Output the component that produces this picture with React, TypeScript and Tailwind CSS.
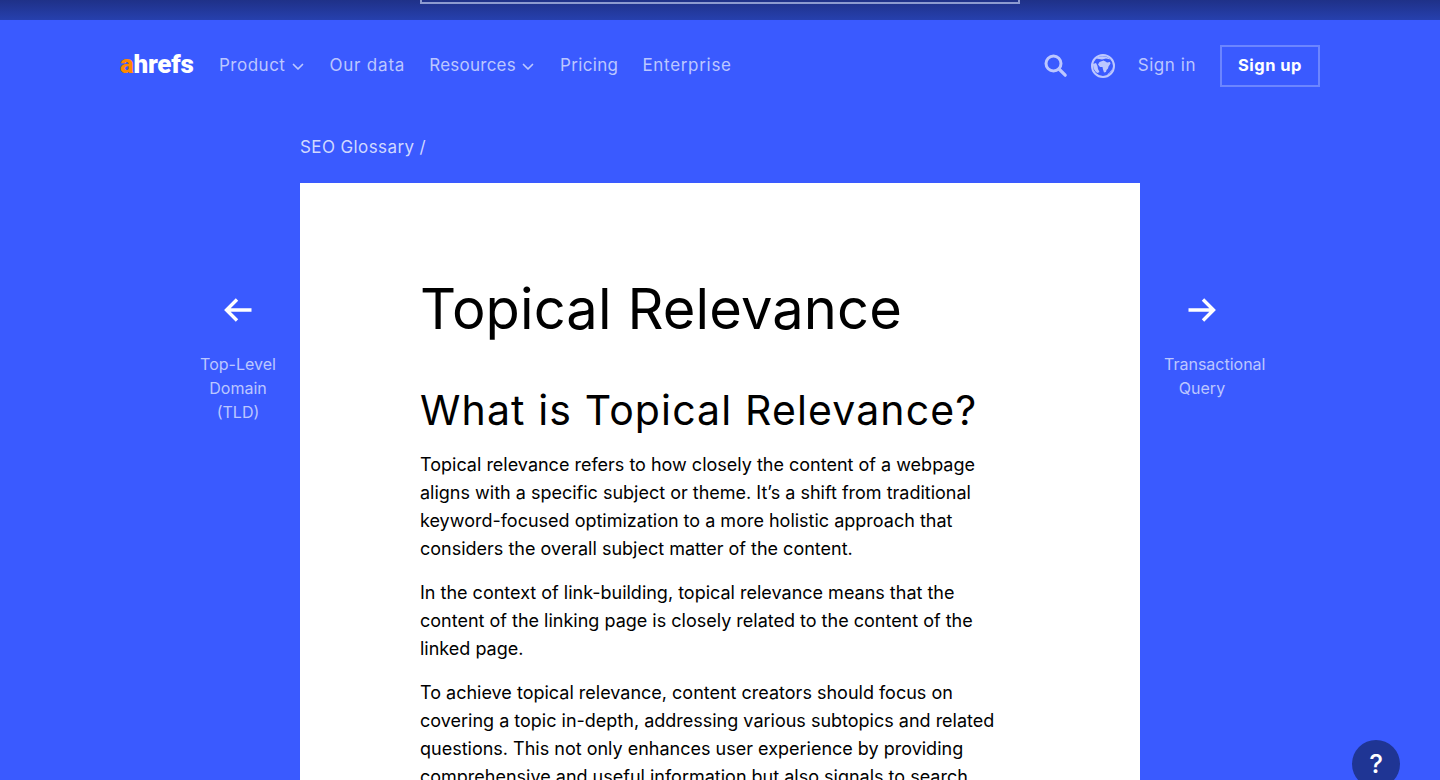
import React from "react";

function Chevron({ after }: { after: string }) {
  return (
    <svg width="12" height="8" viewBox="0 0 12 8" fill="none" className={after}>
      <path d="M1.500 1.500L6 6l4.500-4.500" stroke="#bcc7ff" strokeWidth="1.700" strokeLinecap="round" strokeLinejoin="round" />
    </svg>
  );
}

function Arrow({ flip }: { flip?: boolean }) {
  return (
    <svg width="28" height="26" viewBox="0 0 28 26" fill="none" className={flip ? "rotate-180" : ""}>
      <path d="M27.500 13H3.500M13 2.500L2.500 13 13 23.500" stroke="#fff" strokeWidth="3.400" />
    </svg>
  );
}

function Side({ lines, flip }: { lines: string[]; flip?: boolean }) {
  return (
    <div className="w-[76px] shrink-0 pt-[114px] flex flex-col items-center">
      <Arrow flip={flip} />
      <div className="mt-[29px] w-[76px] text-center text-[16px] leading-[24px] text-[#bcc7ff]">
        {lines.map((l) => (
          <div key={l}>{l}</div>
        ))}
      </div>
    </div>
  );
}

export default function App() {
  return (
    <div className="relative h-[780px] overflow-hidden bg-[#3a5aff] font-['Inter',sans-serif] text-black">
      <div className="h-[20px] bg-gradient-to-b from-[#1f3188] to-[#2640ae] flex justify-center">
        <div className="w-[600px] h-[4px] border-x-2 border-b-2 border-[#8d9bd0]" />
      </div>

      <header className="mx-auto w-[1200px] h-[91px] flex items-center justify-between text-[#bcc7ff] text-[17px]">
        <div className="flex items-center">
          <div className="w-[99px] text-[26px] leading-none font-black tracking-[-0.25px] text-white font-['Roboto',sans-serif] -mt-[3px]">
            <span className="text-[#ff8800]">a</span>hrefs
          </div>
          <nav className="flex items-center gap-[24px]">
            <a className="flex items-center tracking-[0.5px]">Product<Chevron after="ml-[7px] mr-[1px] mt-[3px]" /></a>
            <a className="tracking-[0.8px]">Our data</a>
            <a className="flex items-center tracking-[0.25px]">Resources<Chevron after="ml-[6px] mr-[2px] mt-[3px]" /></a>
            <a className="tracking-[0.35px]">Pricing</a>
            <a className="tracking-[0.7px]">Enterprise</a>
          </nav>
        </div>
        <div className="flex items-center">
          <svg width="24" height="24" viewBox="0 0 24 24" fill="none" className="mr-[23px] mt-[1px]">
            <circle cx="9.500" cy="9.500" r="7.500" stroke="#bcc7ff" strokeWidth="3" />
            <path d="M15 15l6.200 6.200" stroke="#bcc7ff" strokeWidth="3.200" strokeLinecap="round" />
          </svg>
          <svg width="24" height="24" viewBox="0 0 24 24" fill="none" className="mr-[23px] mt-[1px]">
            <circle cx="12" cy="12" r="11" stroke="#bcc7ff" strokeWidth="2" />
            <path d="M5 4.500C8 1.500 16 1.500 19.500 5.500L15 4.500 11 5.500 8 5z" fill="#bcc7ff" />
            <path d="M8.500 8l4-1.500 2 1 1.500 1 3-.5 .5 1.500-2 3-.5 2-1.500 1.500-.5 2-2 .5-1-3-.5-2.500-2.500 0-2-2.500z" fill="#bcc7ff" />
            <path d="M2 10l3-1 1.500 3 .5 3 1.500 3-2 1C3 17 2 13 2 10z" fill="#bcc7ff" />
            <path d="M22 14c-1 3-3.500 6-6.500 7l3-2.500z" fill="#bcc7ff" />
          </svg>
          <span className="mr-[24px] tracking-[0.55px]">Sign in</span>
          <button className="w-[100px] h-[42px] border-2 border-[#6c85ff] text-white font-bold text-[16.500px] tracking-[0.5px]">Sign up</button>
        </div>
      </header>

      <div className="mx-auto w-[840px] h-[72px] pt-[24px] text-[#d0d8ff] text-[17px] tracking-[0.4px] leading-[24px]">
        SEO Glossary /
      </div>

      <div className="flex justify-center gap-[24px]">
        <Side lines={["Top-Level", "Domain", "(TLD)"]} />
        <main className="w-[840px] shrink-0 bg-white px-[120px] pt-[92px] h-[700px]">
          <h1 className="text-[56px] leading-[68px] font-normal tracking-[0.12px]">Topical Relevance</h1>
          <h2 className="mt-[41px] text-[41px] leading-[52px] font-normal tracking-[1.130px]">What is Topical Relevance?</h2>
          <div className="mt-[15px] w-[600px] text-[18px] leading-[28px] flex flex-col gap-[16px]">
            <p>Topical relevance refers to how closely the content of a webpage aligns with a specific subject or theme. It’s a shift from traditional keyword-focused optimization to a more holistic approach that considers the overall subject matter of the content.</p>
            <p>In the context of link-building, topical relevance means that the content of the linking page is closely related to the content of the linked page.</p>
            <p>To achieve topical relevance, content creators should focus on covering a topic in-depth, addressing various subtopics and related questions. This not only enhances user experience by providing comprehensive and useful information but also signals to search</p>
          </div>
        </main>
        <Side lines={["Transactional", "Query"]} flip />
      </div>

      <button className="absolute left-[1352px] top-[740px] w-[48px] h-[48px] rounded-full bg-[#1f3594] text-white text-[26px] font-medium leading-[48px] text-center">?</button>
    </div>
  );
}
